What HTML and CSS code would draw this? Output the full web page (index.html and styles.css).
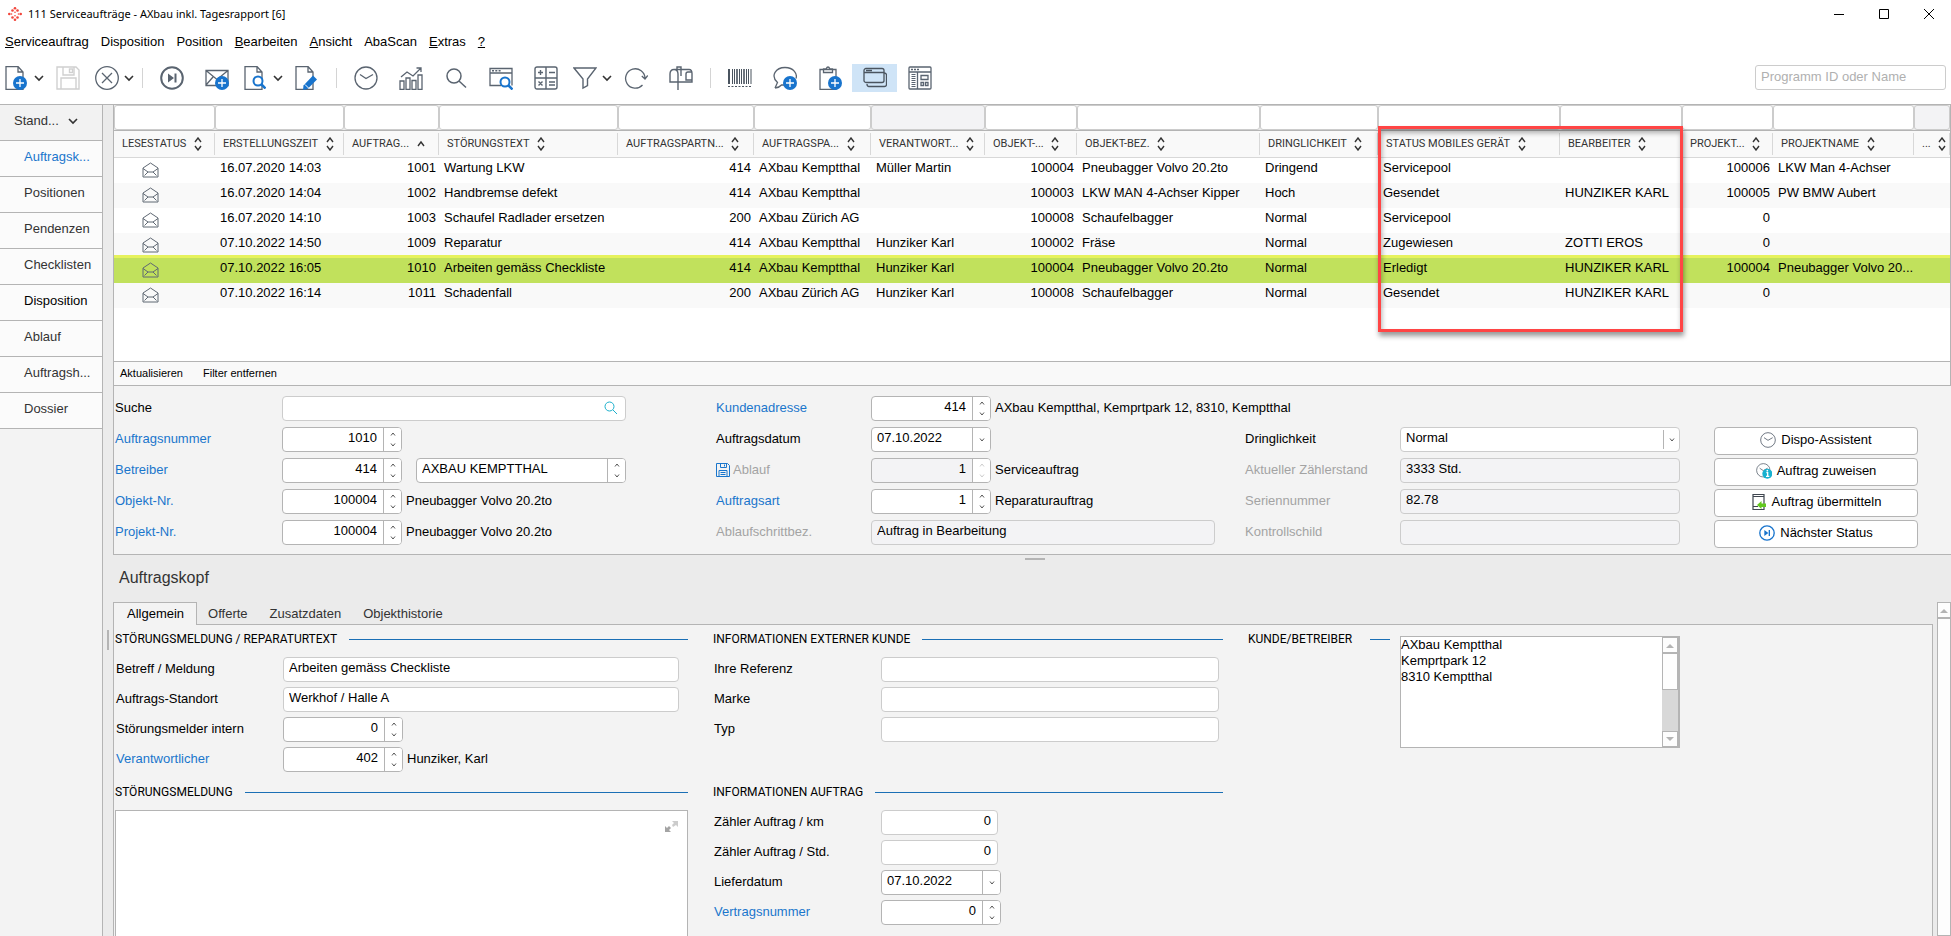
FILE: index.html
```html
<!DOCTYPE html>
<html lang="de">
<head>
    <meta charset="UTF-8">
    <meta name="viewport" content="width=device-width, initial-scale=1.0">
    <title>111 Serviceaufträge - AXbau inkl. Tagesrapport [6]</title>
    <link rel="stylesheet" href="styles.css">
</head>
<body>
    <!-- Icon definitions -->
    <svg class="defs" aria-hidden="true">
        <symbol id="chev" viewBox="0 0 10 8"><path d="M1 2l4 4 4-4" fill="none" stroke="#333" stroke-width="1.6"/></symbol>
        <symbol id="up" viewBox="0 0 6 4"><path d="M1 3.5l2-2.5 2 2.5" fill="none" stroke="currentColor"/></symbol>
        <symbol id="down" viewBox="0 0 6 4"><path d="M1 .5l2 2.5 2-2.5" fill="none" stroke="currentColor"/></symbol>
        <symbol id="sort" viewBox="0 0 8 14"><path d="M1 5l3-4 3 4M1 9l3 4 3-4" fill="none" stroke="#333" stroke-width="1.4"/></symbol>
        <symbol id="sort-up" viewBox="0 0 8 14"><path d="M1 9l3-4 3 4" fill="none" stroke="#333" stroke-width="1.4"/></symbol>
        <symbol id="mail-open" viewBox="0 0 17 16"><path d="M1 6l7.500-5L16 6v9H1zM1 6.500l5 3.500h5l5-3.500M2.500 13.500L6 10M14.500 13.500L11 10" fill="none" stroke="#5f6873"/></symbol>
        <symbol id="plus" viewBox="0 0 14 14"><circle cx="7" cy="7" r="7" fill="#1874cd"/><path d="M7 3v8M3 7h8" stroke="#fff" stroke-width="1.3"/></symbol>
        <symbol id="lens-blue" viewBox="0 0 14 14"><circle cx="6" cy="6" r="4.500" fill="#fff" stroke="#1874cd" stroke-width="2"/><path d="M9 9l4.500 4.500" stroke="#1874cd" stroke-width="2.500"/></symbol>
        <symbol id="page" viewBox="0 0 24 24"><path d="M1 .5h12l5 5.500v17.500H1zM13 .5V6h5" fill="#fff" stroke="#5a6470" stroke-width="1.300"/></symbol>
        <symbol id="clock" viewBox="0 0 24 24"><circle cx="12" cy="12" r="11" fill="none" stroke="#5a6470" stroke-width="1.300"/><path d="M6 8.500l6 4 7-4" fill="none" stroke="#5a6470" stroke-width="1.300"/></symbol>
        <symbol id="next" viewBox="0 0 24 24"><circle cx="12" cy="12" r="10.800" fill="none" stroke="currentColor" stroke-width="2"/><path d="M8 7.500l6 4.500-6 4.500zM14.500 7.500h2v9h-2z" fill="currentColor"/></symbol>
        <symbol id="arrow-up" viewBox="0 0 8 5"><path d="M0 5l4-4 4 4z" fill="#b4b4b4"/></symbol>
        <symbol id="arrow-down" viewBox="0 0 8 5"><path d="M0 0l4 4 4-4z" fill="#b4b4b4"/></symbol>
    </svg>

    <header class="titlebar">
        <svg class="logo" viewBox="0 0 14 14" fill="#f2463c">
            <circle cx="7" cy="1.300" r="1.300"/><circle cx="4.500" cy="3.500" r="1.300"/><circle cx="9.500" cy="3.500" r="1.300"/><circle cx="7" cy="5.200" r=".8"/>
            <circle cx="1.300" cy="7" r="1.300"/><circle cx="3.500" cy="7" r=".8"/><circle cx="12.700" cy="7" r="1.300"/><circle cx="10.500" cy="7" r=".8"/>
            <circle cx="7" cy="12.700" r="1.300"/><circle cx="4.500" cy="10.500" r="1.300"/><circle cx="9.500" cy="10.500" r="1.300"/><circle cx="7" cy="8.800" r=".8"/>
        </svg>
        <h1 class="title">111 Serviceaufträge - AXbau inkl. Tagesrapport [6]</h1>
        <button class="win-btn" aria-label="Minimieren"><svg width="12" height="12"><path d="M1 6.500h10" stroke="#000"/></svg></button>
        <button class="win-btn" aria-label="Maximieren"><svg width="12" height="12"><path d="M1.500 1.500h9v9h-9z" fill="none" stroke="#000"/></svg></button>
        <button class="win-btn" aria-label="Schliessen"><svg width="12" height="12"><path d="M1 1l10 10M11 1L1 11" stroke="#000"/></svg></button>
    </header>

    <nav class="menubar">
        <a href="#"><u>S</u>erviceauftrag</a>
        <a href="#">Disposition</a>
        <a href="#">Position</a>
        <a href="#"><u>B</u>earbeiten</a>
        <a href="#"><u>A</u>nsicht</a>
        <a href="#">AbaScan</a>
        <a href="#"><u>E</u>xtras</a>
        <a href="#"><u>?</u></a>
    </nav>

    <div class="toolbar">
        <button class="tool drop" aria-label="Neu">
            <svg class="icon" viewBox="0 0 24 24"><use href="#page" width="24" height="24"/><use href="#plus" x="8" y="10" width="14" height="14"/></svg>
            <svg class="chev"><use href="#chev"/></svg>
        </button>
        <button class="tool" aria-label="Speichern" disabled>
            <svg class="icon" viewBox="0 0 24 24" fill="none" stroke="#d0d0d0" stroke-width="1.400"><path d="M1 1h19l3 3v19H1zM5 23V12h15v11M7 1v8h11V1"/><rect x="13.500" y="3" width="3" height="3.500"/></svg>
        </button>
        <button class="tool drop" aria-label="Abbrechen">
            <svg class="icon" viewBox="0 0 24 24" fill="none" stroke="#5a6470" stroke-width="1.300"><circle cx="12" cy="12" r="11.300"/><path d="M7 7l10 10M17 7L7 17"/></svg>
            <svg class="chev"><use href="#chev"/></svg>
        </button>
        <span class="sep"></span>
        <button class="tool" aria-label="Weiter"><svg class="icon dark"><use href="#next"/></svg></button>
        <button class="tool" aria-label="Neue Mail">
            <svg class="icon" viewBox="0 0 24 24"><path d="M1 4.500h22v15H1zM1 4.500l11 9 11-9M1 19l7-8" fill="none" stroke="#5a6470" stroke-width="1.300"/><use href="#plus" x="10" y="10" width="14" height="14"/></svg>
        </button>
        <button class="tool drop" aria-label="Vorschau">
            <svg class="icon" viewBox="0 0 24 24"><use href="#page" width="24" height="24"/><use href="#lens-blue" x="8" y="9" width="14" height="14"/></svg>
            <svg class="chev"><use href="#chev"/></svg>
        </button>
        <button class="tool" aria-label="Bearbeiten">
            <svg class="icon" viewBox="0 0 24 24"><use href="#page" width="24" height="24"/><path d="M8.500 19.500l9.500-10 4 4-9.500 9.500-4.500 1z" fill="#1874cd"/><path d="M10 18.500l3.500 3.500" stroke="#fff"/></svg>
        </button>
        <span class="sep"></span>
        <button class="tool" aria-label="Zeit"><svg class="icon"><use href="#clock"/></svg></button>
        <button class="tool" aria-label="Statistik">
            <svg class="icon" viewBox="0 0 24 24" fill="none" stroke="#5a6470" stroke-width="1.300"><path d="M1 15h4v8.500H1zM7 12h4v11.500H7zM13 14.500h4v9h-4zM19 9h4v14.500h-4zM2 11l6-5 6 4 8-8M17.500 2H22v4"/></svg>
        </button>
        <button class="tool" aria-label="Suchen">
            <svg class="icon" viewBox="0 0 24 24" fill="none" stroke="#5a6470" stroke-width="1.500"><circle cx="10" cy="10" r="7"/><path d="M15 15l7 6.500"/></svg>
        </button>
        <button class="tool" aria-label="Fenster suchen">
            <svg class="icon" viewBox="0 0 24 24"><path d="M12 19.500H1v-17h22v17M1 7h22" fill="none" stroke="#5a6470" stroke-width="1.300"/><path d="M3 4.800h9" stroke="#5a6470" stroke-width="1.500" stroke-dasharray="2 1.300"/><use href="#lens-blue" x="10" y="10" width="14" height="14"/></svg>
        </button>
        <button class="tool" aria-label="Rechner">
            <svg class="icon" viewBox="0 0 24 24" fill="none" stroke="#5a6470" stroke-width="1.400"><rect x="1" y="1" width="22" height="22" rx="2"/><path d="M12 1v22M1 12h22M4 6.500h5M6.500 4v5M15 6.500h6M4.500 15.500l4 4M8.500 15.500l-4 4M15 16h6M15 19h6"/></svg>
        </button>
        <button class="tool drop" aria-label="Filter">
            <svg class="icon" viewBox="0 0 24 24" fill="none" stroke="#5a6470" stroke-width="1.400"><path d="M1 2h22l-8.500 11v6.500L10 22v-9z"/></svg>
            <svg class="chev"><use href="#chev"/></svg>
        </button>
        <button class="tool" aria-label="Neu laden">
            <svg class="icon" viewBox="0 0 24 24" fill="none" stroke="#5a6470" stroke-width="1.300"><path d="M18.500 19A9.700 9.700 0 1 1 21 12.500M17.800 10l3.200 3 2.800-3.500"/></svg>
        </button>
        <button class="tool" aria-label="Briefkasten">
            <svg class="icon" viewBox="0 0 24 24" fill="none" stroke="#5a6470" stroke-width="1.400"><path d="M5 3.500h15q3 0 3 4V16H1V8q0-4.500 4-4.500t4 4.500v8M9 16v8M8 4V1h4v3v6M17 8q0-2 2-2h4M17 8v6h6"/></svg>
        </button>
        <span class="sep"></span>
        <button class="tool" aria-label="Barcode">
            <svg class="icon" viewBox="0 0 24 24" stroke="#4a545f"><path d="M1 3v15" stroke-width="2"/><path d="M4.500 3v15M6.500 3v15M11.500 3v15M13.500 3v15M18.500 3v15M20.500 3v15M23 3v15"/><path d="M9 3v15M16 3v15" stroke-width="1.600"/><path d="M0 20.500h24" stroke-dasharray="2 1.500"/></svg>
        </button>
        <button class="tool" aria-label="Kommentar">
            <svg class="icon" viewBox="0 0 24 24"><path d="M2 22l2.500-5.500C-3 9.500 3 1.500 12 1.500S24.500 8 23 12.500M2 22q4.500-.5 6.500-3h3" fill="none" stroke="#5a6470" stroke-width="1.300"/><use href="#plus" x="10" y="10" width="14" height="14"/></svg>
        </button>
        <button class="tool" aria-label="Einfügen">
            <svg class="icon" viewBox="0 0 24 24"><path d="M2 3.500h16v20H2zM5.500 6.500h9V3h-2.500q-2-4-4 0H5.500z" fill="#fff" stroke="#5a6470" stroke-width="1.300"/><use href="#plus" x="10" y="10" width="14" height="14"/></svg>
        </button>
        <button class="tool active" aria-label="Fenster">
            <svg class="icon" viewBox="0 0 24 24" fill="none" stroke="#4a545f" stroke-width="1.300"><rect x="1" y="2.500" width="20" height="14" rx="2"/><path d="M1 6.500h20M3 4.500h6M21 7q2.500 0 2.500 2v9.500q0 2-2 2H6q-2 0-2-2.500"/></svg>
        </button>
        <button class="tool" aria-label="Layout">
            <svg class="icon" viewBox="0 0 24 24" fill="none" stroke="#5a6470" stroke-width="1.300"><rect x="1" y="1" width="22" height="22" rx="1"/><path d="M1 6h22M9.500 6v17M13 9.500h7v4h-7zM13 16.500h2.500v3H13zM17.500 16.500H20v3h-2.500z"/><path d="M3 3.500h8" stroke-dasharray="2 1"/><path d="M5.500 8v13" stroke-width="4" stroke-dasharray="1 1"/></svg>
        </button>
        <input class="program-search" type="text" placeholder="Programm ID oder Name" aria-label="Programm ID oder Name">
    </div>

    <div class="main">
        <aside class="sidebar">
            <button class="side-head">Stand... <svg class="chev"><use href="#chev"/></svg></button>
            <a class="side-item current" href="#">Auftragsk...</a>
            <a class="side-item" href="#">Positionen</a>
            <a class="side-item" href="#">Pendenzen</a>
            <a class="side-item" href="#">Checklisten</a>
            <a class="side-item strong" href="#">Disposition</a>
            <a class="side-item" href="#">Ablauf</a>
            <a class="side-item" href="#">Auftragsh...</a>
            <a class="side-item" href="#">Dossier</a>
        </aside>
        <div class="gutter"><span class="grip-v"></span></div>

        <main class="content">
            <!-- Order list -->
            <section class="list">
                <div class="list-scroll">
                    <table>
                        <colgroup>
                            <col class="c101"><col class="c129"><col class="c95"><col class="c179"><col class="c136">
                            <col class="c117"><col class="c114"><col class="c92"><col class="c183"><col class="c118">
                            <col class="c182"><col class="c122"><col class="c91"><col class="c141"><col class="c36">
                        </colgroup>
                        <thead>
                            <tr class="filters">
                                <td><input aria-label="Filter Lesestatus"></td>
                                <td><input aria-label="Filter Erstellungszeit"></td>
                                <td><input aria-label="Filter Auftragsnummer"></td>
                                <td><input aria-label="Filter Störungstext"></td>
                                <td><input aria-label="Filter Auftragspartner-Nr."></td>
                                <td><input aria-label="Filter Auftragspartner"></td>
                                <td><input aria-label="Filter Verantwortlicher" disabled></td>
                                <td><input aria-label="Filter Objekt-Nr."></td>
                                <td><input aria-label="Filter Objekt-Bez."></td>
                                <td><input aria-label="Filter Dringlichkeit"></td>
                                <td><input aria-label="Filter Status"></td>
                                <td><input aria-label="Filter Bearbeiter"></td>
                                <td><input aria-label="Filter Projekt-Nr."></td>
                                <td><input aria-label="Filter Projektname"></td>
                                <td><input aria-label="Filter weitere" disabled></td>
                            </tr>
                            <tr class="heads">
                                <th>LESESTATUS <svg class="sort"><use href="#sort"/></svg></th>
                                <th>ERSTELLUNGSZEIT <svg class="sort"><use href="#sort"/></svg></th>
                                <th class="num">AUFTRAG... <svg class="sort"><use href="#sort-up"/></svg></th>
                                <th>STÖRUNGSTEXT <svg class="sort"><use href="#sort"/></svg></th>
                                <th class="num">AUFTRAGSPARTN... <svg class="sort"><use href="#sort"/></svg></th>
                                <th>AUFTRAGSPA... <svg class="sort"><use href="#sort"/></svg></th>
                                <th>VERANTWORT... <svg class="sort"><use href="#sort"/></svg></th>
                                <th class="num">OBJEKT-... <svg class="sort"><use href="#sort"/></svg></th>
                                <th>OBJEKT-BEZ. <svg class="sort"><use href="#sort"/></svg></th>
                                <th>DRINGLICHKEIT <svg class="sort"><use href="#sort"/></svg></th>
                                <th>STATUS MOBILES GERÄT <svg class="sort"><use href="#sort"/></svg></th>
                                <th>BEARBEITER <svg class="sort"><use href="#sort"/></svg></th>
                                <th class="num">PROJEKT... <svg class="sort"><use href="#sort"/></svg></th>
                                <th>PROJEKTNAME <svg class="sort"><use href="#sort"/></svg></th>
                                <th>... <svg class="sort"><use href="#sort"/></svg></th>
                            </tr>
                        </thead>
                        <tbody>
                            <tr>
                                <td class="status"><svg class="mail"><use href="#mail-open"/></svg></td><td>16.07.2020 14:03</td><td class="num">1001</td><td>Wartung LKW</td><td class="num">414</td><td>AXbau Kemptthal</td><td>Müller Martin</td><td class="num">100004</td><td>Pneubagger Volvo 20.2to</td><td>Dringend</td><td>Servicepool</td><td></td><td class="num">100006</td><td>LKW Man 4-Achser</td><td></td>
                            </tr>
                            <tr>
                                <td class="status"><svg class="mail"><use href="#mail-open"/></svg></td><td>16.07.2020 14:04</td><td class="num">1002</td><td>Handbremse defekt</td><td class="num">414</td><td>AXbau Kemptthal</td><td></td><td class="num">100003</td><td>LKW MAN 4-Achser Kipper</td><td>Hoch</td><td>Gesendet</td><td>HUNZIKER KARL</td><td class="num">100005</td><td>PW BMW Aubert</td><td></td>
                            </tr>
                            <tr>
                                <td class="status"><svg class="mail"><use href="#mail-open"/></svg></td><td>16.07.2020 14:10</td><td class="num">1003</td><td>Schaufel Radlader ersetzen</td><td class="num">200</td><td>AXbau Zürich AG</td><td></td><td class="num">100008</td><td>Schaufelbagger</td><td>Normal</td><td>Servicepool</td><td></td><td class="num">0</td><td></td><td></td>
                            </tr>
                            <tr>
                                <td class="status"><svg class="mail"><use href="#mail-open"/></svg></td><td>07.10.2022 14:50</td><td class="num">1009</td><td>Reparatur</td><td class="num">414</td><td>AXbau Kemptthal</td><td>Hunziker Karl</td><td class="num">100002</td><td>Fräse</td><td>Normal</td><td>Zugewiesen</td><td>ZOTTI EROS</td><td class="num">0</td><td></td><td></td>
                            </tr>
                            <tr class="selected">
                                <td class="status"><svg class="mail"><use href="#mail-open"/></svg></td><td>07.10.2022 16:05</td><td class="num">1010</td><td>Arbeiten gemäss Checkliste</td><td class="num">414</td><td>AXbau Kemptthal</td><td>Hunziker Karl</td><td class="num">100004</td><td>Pneubagger Volvo 20.2to</td><td>Normal</td><td>Erledigt</td><td>HUNZIKER KARL</td><td class="num">100004</td><td>Pneubagger Volvo 20...</td><td></td>
                            </tr>
                            <tr>
                                <td class="status"><svg class="mail"><use href="#mail-open"/></svg></td><td>07.10.2022 16:14</td><td class="num">1011</td><td>Schadenfall</td><td class="num">200</td><td>AXbau Zürich AG</td><td>Hunziker Karl</td><td class="num">100008</td><td>Schaufelbagger</td><td>Normal</td><td>Gesendet</td><td>HUNZIKER KARL</td><td class="num">0</td><td></td><td></td>
                            </tr>
                        </tbody>
                    </table>
                    <div class="highlight"></div>
                </div>
                <div class="list-actions">
                    <button>Aktualisieren</button>
                    <button>Filter entfernen</button>
                </div>
            </section>

            <!-- Order details -->
            <section class="order">
                <div class="fields">
                    <div class="row"><label for="suche">Suche</label>
                        <div class="box light search"><input id="suche" type="text"><svg class="lens" viewBox="0 0 14 14"><circle cx="5.500" cy="5.500" r="4.500"/><path d="M9 9l4 4"/></svg></div>
                    </div>
                    <div class="row"><label class="link" for="nr">Auftragsnummer</label>
                        <div class="box spin"><input id="nr" class="num" value="1010"><span class="steps"><button aria-label="Mehr"><svg><use href="#up"/></svg></button><button aria-label="Weniger"><svg><use href="#down"/></svg></button></span></div>
                    </div>
                    <div class="row"><label class="link" for="betreiber">Betreiber</label>
                        <div class="box spin"><input id="betreiber" class="num" value="414"><span class="steps"><button aria-label="Mehr"><svg><use href="#up"/></svg></button><button aria-label="Weniger"><svg><use href="#down"/></svg></button></span></div>
                        <div class="box spin name"><input aria-label="Betreiber Name" value="AXBAU KEMPTTHAL"><span class="steps"><button aria-label="Mehr"><svg><use href="#up"/></svg></button><button aria-label="Weniger"><svg><use href="#down"/></svg></button></span></div>
                    </div>
                    <div class="row"><label class="link" for="objekt">Objekt-Nr.</label>
                        <div class="box spin"><input id="objekt" class="num" value="100004"><span class="steps"><button aria-label="Mehr"><svg><use href="#up"/></svg></button><button aria-label="Weniger"><svg><use href="#down"/></svg></button></span></div>
                        <span class="after">Pneubagger Volvo 20.2to</span>
                    </div>
                    <div class="row"><label class="link" for="projekt">Projekt-Nr.</label>
                        <div class="box spin"><input id="projekt" class="num" value="100004"><span class="steps"><button aria-label="Mehr"><svg><use href="#up"/></svg></button><button aria-label="Weniger"><svg><use href="#down"/></svg></button></span></div>
                        <span class="after">Pneubagger Volvo 20.2to</span>
                    </div>
                </div>

                <div class="fields narrow">
                    <div class="row"><label class="link" for="adresse">Kundenadresse</label>
                        <div class="box spin"><input id="adresse" class="num" value="414"><span class="steps"><button aria-label="Mehr"><svg><use href="#up"/></svg></button><button aria-label="Weniger"><svg><use href="#down"/></svg></button></span></div>
                        <span class="after">AXbau Kemptthal, Kemprtpark 12, 8310, Kemptthal</span>
                    </div>
                    <div class="row"><label for="datum">Auftragsdatum</label>
                        <div class="box spin"><input id="datum" value="07.10.2022"><span class="steps"><button aria-label="Kalender"><svg><use href="#down"/></svg></button></span></div>
                    </div>
                    <div class="row"><label class="off" for="ablauf"><svg class="disk" viewBox="0 0 14 14"><path d="M.5.5h11l2 2v11H.5zM4.500.5v4h6v-4M3 13.500v-6h8v6M4.500 9.500h5M4.500 11.500h5M8.500 1.500v2"/></svg>Ablauf</label>
                        <div class="box spin off"><input id="ablauf" class="num" value="1" readonly><span class="steps"><button aria-label="Mehr"><svg><use href="#up"/></svg></button><button aria-label="Weniger"><svg><use href="#down"/></svg></button></span></div>
                        <span class="after">Serviceauftrag</span>
                    </div>
                    <div class="row"><label class="link" for="art">Auftragsart</label>
                        <div class="box spin"><input id="art" class="num" value="1"><span class="steps"><button aria-label="Mehr"><svg><use href="#up"/></svg></button><button aria-label="Weniger"><svg><use href="#down"/></svg></button></span></div>
                        <span class="after">Reparaturauftrag</span>
                    </div>
                    <div class="row"><label class="off" for="schritt">Ablaufschrittbez.</label>
                        <div class="box light off search"><input id="schritt" value="Auftrag in Bearbeitung" readonly></div>
                    </div>
                </div>

                <div class="fields narrow second">
                    <div class="row"><label for="dringlich">Dringlichkeit</label>
                        <div class="box light wide"><select id="dringlich"><option>Normal</option><option>Hoch</option><option>Dringend</option></select><span class="pick"><svg><use href="#down"/></svg></span></div>
                    </div>
                    <div class="row"><label class="off" for="zaehler">Aktueller Zählerstand</label>
                        <div class="box light off wide"><input id="zaehler" value="3333 Std." readonly></div>
                    </div>
                    <div class="row"><label class="off" for="serie">Seriennummer</label>
                        <div class="box light off wide"><input id="serie" value="82.78" readonly></div>
                    </div>
                    <div class="row"><label class="off" for="schild">Kontrollschild</label>
                        <div class="box light off wide"><input id="schild" readonly></div>
                    </div>
                </div>

                <div class="actions">
                    <button><svg class="act"><use href="#clock"/></svg>Dispo-Assistent</button>
                    <button><svg class="act" viewBox="0 0 24 24"><use href="#clock" width="22" height="22"/><circle cx="17" cy="16" r="7.500" fill="#17b1d0"/><path d="M15.500 14.500h2v5.500M15 20h5" fill="none" stroke="#fff" stroke-width="2"/><circle cx="17" cy="11.500" r="1.300" fill="#fff"/></svg>Auftrag zuweisen</button>
                    <button><svg class="act" viewBox="0 0 16 16"><path d="M2 .5h11v15H2zM2 2.500h11M2 12.500h5" fill="none" stroke="#3f4650" stroke-width="1.200"/><path d="M6 11l4.500-4v2.500H15v3.500h-4.500V15z" fill="#62c81e"/></svg>Auftrag übermitteln</button>
                    <button><svg class="act blue"><use href="#next"/></svg>Nächster Status</button>
                </div>
            </section>

            <!-- Lower pane -->
            <div class="pane-head">
                <span class="grip-h"></span>
                <h2>Auftragskopf</h2>
            </div>
            <div class="pane">
                <div class="pane-main">
                    <div class="tabs">
                        <button class="tab on">Allgemein</button>
                        <button class="tab">Offerte</button>
                        <button class="tab">Zusatzdaten</button>
                        <button class="tab">Objekthistorie</button>
                    </div>
                    <div class="sheet">
                        <section class="group">
                            <h3>STÖRUNGSMELDUNG / REPARATURTEXT</h3>
                            <div class="row"><label for="betreff">Betreff / Meldung</label><div class="box light full"><input id="betreff" value="Arbeiten gemäss Checkliste"></div></div>
                            <div class="row"><label for="standort">Auftrags-Standort</label><div class="box light full"><input id="standort" value="Werkhof / Halle A"></div></div>
                            <div class="row"><label for="melder">Störungsmelder intern</label>
                                <div class="box spin"><input id="melder" class="num" value="0"><span class="steps"><button aria-label="Mehr"><svg><use href="#up"/></svg></button><button aria-label="Weniger"><svg><use href="#down"/></svg></button></span></div>
                            </div>
                            <div class="row"><label class="link" for="verantw">Verantwortlicher</label>
                                <div class="box spin"><input id="verantw" class="num" value="402"><span class="steps"><button aria-label="Mehr"><svg><use href="#up"/></svg></button><button aria-label="Weniger"><svg><use href="#down"/></svg></button></span></div>
                                <span class="after">Hunziker, Karl</span>
                            </div>
                        </section>

                        <section class="group">
                            <h3>INFORMATIONEN EXTERNER KUNDE</h3>
                            <div class="row"><label for="referenz">Ihre Referenz</label><div class="box light ext"><input id="referenz"></div></div>
                            <div class="row"><label for="marke">Marke</label><div class="box light ext"><input id="marke"></div></div>
                            <div class="row"><label for="typ">Typ</label><div class="box light ext"><input id="typ"></div></div>
                        </section>

                        <section class="customer">
                            <h3>KUNDE/BETREIBER</h3>
                            <div class="memo">
                                <textarea aria-label="Kunde/Betreiber">AXbau Kemptthal
Kemprtpark 12
8310 Kemptthal</textarea>
                                <div class="bar">
                                    <span class="bar-btn"><svg><use href="#arrow-up"/></svg></span>
                                    <span class="thumb"></span>
                                    <span class="bar-btn end"><svg><use href="#arrow-down"/></svg></span>
                                </div>
                            </div>
                        </section>

                        <section class="group grow">
                            <h3>STÖRUNGSMELDUNG</h3>
                            <div class="note">
                                <textarea aria-label="Störungsmeldung"></textarea>
                                <svg class="expand" viewBox="0 0 14 14"><path d="M7 2h6v6l-2-2-3 2-1-2 2-2z" fill="#ccc"/><path d="M0 7l2 2 2-2 2 2-2 2 2 2H0z" fill="#a4a4a4"/></svg>
                            </div>
                        </section>

                        <section class="group">
                            <h3>INFORMATIONEN AUFTRAG</h3>
                            <div class="row"><label for="km">Zähler Auftrag / km</label><div class="box light count"><input id="km" class="num" value="0"></div></div>
                            <div class="row"><label for="std">Zähler Auftrag / Std.</label><div class="box light count"><input id="std" class="num" value="0"></div></div>
                            <div class="row"><label for="liefer">Lieferdatum</label>
                                <div class="box spin"><input id="liefer" value="07.10.2022"><span class="steps"><button aria-label="Kalender"><svg><use href="#down"/></svg></button></span></div>
                            </div>
                            <div class="row"><label class="link" for="vertrag">Vertragsnummer</label>
                                <div class="box spin"><input id="vertrag" class="num" value="0"><span class="steps"><button aria-label="Mehr"><svg><use href="#up"/></svg></button><button aria-label="Weniger"><svg><use href="#down"/></svg></button></span></div>
                            </div>
                        </section>
                    </div>
                </div>
                <div class="bar page-bar">
                    <span class="bar-btn"><svg><use href="#arrow-up"/></svg></span>
                    <span class="thumb"></span>
                </div>
            </div>
        </main>
    </div>
</body>
</html>
```
FILE: styles.css
```css
* {
    box-sizing: border-box;
}
body {
    margin: 0;
    height: 100vh;
    display: flex;
    flex-direction: column;
    overflow: hidden;
    background: #fff;
    color: #000;
    font: 13px/16px "Liberation Sans", Arial, sans-serif;
}
button, input, select, textarea {
    font: inherit;
    color: inherit;
}
button {
    padding: 0;
    border: none;
    background: none;
    cursor: pointer;
}
a {
    color: inherit;
    text-decoration: none;
}
svg {
    display: block;
    flex: none;
}
.defs {
    width: 0;
    height: 0;
    position: absolute;
}

/* Title, menu and toolbar */
.titlebar {
    display: flex;
    align-items: center;
    height: 28px;
    padding-left: 8px;
}
.logo {
    width: 14px;
    height: 14px;
}
.title {
    flex: 1;
    margin: 0 0 0 6px;
    font: 11px/16px "Noto Sans", "Open Sans", sans-serif;
}
.win-btn {
    width: 45px;
    height: 28px;
    display: flex;
    align-items: center;
    justify-content: center;
}
.menubar {
    display: flex;
    height: 28px;
    align-items: center;
    gap: 12px;
    padding: 0 5px 1px;
}
.toolbar {
    display: flex;
    align-items: center;
    height: 49px;
    flex: none;
    padding-bottom: 5px;
    padding-right: 5px;
    border-bottom: 1px solid #b4b4b4;
}
.tool {
    display: flex;
    align-items: center;
    justify-content: center;
    gap: 5px;
    width: 45px;
    height: 28px;
}
.tool.drop {
    justify-content: flex-start;
    padding-left: 5px;
}
.tool.active {
    background: #cfe4f7;
}
.icon {
    width: 24px;
    height: 24px;
}
.icon.dark {
    color: #5a6470;
}
.chev {
    width: 10px;
    height: 8px;
}
.sep {
    width: 1px;
    height: 20px;
    margin: 0 6px 0 7px;
    background: #d4d4d4;
}
.program-search {
    width: 191px;
    height: 25px;
    margin-left: auto;
    padding: 0 5px 2px;
    border: 1px solid #ccc;
    border-radius: 3px;
}
.program-search::placeholder {
    color: #b0b0b0;
}

.main {
    flex: 1;
    display: flex;
    min-height: 0;
}
.sidebar {
    width: 103px;
    flex: none;
    display: flex;
    flex-direction: column;
    background: #f3f3f3;
    border-right: 1px solid #b4b4b4;
}
.side-head, .side-item {
    display: flex;
    align-items: center;
    height: 36px;
    border-bottom: 1px solid #b4b4b4;
    color: #333;
}
.side-head {
    gap: 9px;
    padding: 0 0 3px 14px;
    background: #f2f2f2;
}
.side-item {
    padding: 0 0 3px 24px;
    background: #fbfbfb;
}
.side-item.current {
    color: #1a76cc;
}
.side-item.strong {
    color: #000;
}
.gutter {
    width: 10px;
    flex: none;
    padding: 525px 0 0 4px;
    background: #ebebeb;
}
.grip-v {
    display: block;
    width: 2px;
    height: 20px;
    background: #b4b4b4;
}
.content {
    flex: 1;
    display: flex;
    flex-direction: column;
    min-width: 0;
    background: #ebebeb;
}

/* Order list */
.list {
    background: #fff;
    border: 1px solid #b4b4b4;
    border-top: none;
}
.list-scroll {
    position: relative;
    height: 256px;
}
table {
    width: 100%;
    table-layout: fixed;
    border-collapse: separate;
    border-spacing: 0;
}
.c101 { width: 101px; }
.c129 { width: 129px; }
.c95 { width: 95px; }
.c179 { width: 179px; }
.c136 { width: 136px; }
.c117 { width: 117px; }
.c114 { width: 114px; }
.c92 { width: 92px; }
.c183 { width: 183px; }
.c118 { width: 118px; }
.c182 { width: 182px; }
.c122 { width: 122px; }
.c91 { width: 91px; }
.c141 { width: 141px; }
.c36 { width: 36px; }
.filters td {
    height: 26px;
    padding: 0;
    background: #ececec;
    border-bottom: 1px solid #b4b4b4;
}
.filters input {
    display: block;
    width: 100%;
    height: 25px;
    padding: 0 5px;
    border: 1px solid #ccc;
    border-radius: 3px;
    background: #fff;
}
.filters input:disabled {
    background: #f3f3f5;
}
.heads th {
    height: 27px;
    padding: 0 8px;
    background: linear-gradient(#d8d8d8, #d8d8d8) right / 1px 22px no-repeat #f9f9f9;
    border-bottom: 1px solid #d8d8d8;
    color: #333;
    font: 11px/16px Roboto, "Liberation Sans", sans-serif;
    text-align: left;
    white-space: nowrap;
}
.heads th.num {
    padding-right: 11px;
}
.sort {
    display: inline-block;
    width: 8px;
    height: 14px;
    margin-left: 5px;
    vertical-align: middle;
}
tbody td {
    height: 25px;
    padding: 0 3px 5px 5px;
    white-space: nowrap;
    overflow: hidden;
}
tbody tr:nth-child(even) td {
    background: #f9f9f9;
}
tbody tr:nth-child(4) td {
    box-shadow: inset 0 -3px #e6f25c;
}
tbody tr.selected td {
    background: #c1e15c;
}
.num {
    text-align: right;
}
tbody td.status {
    padding: 0 0 2px 28px;
}
.mail {
    width: 17px;
    height: 16px;
}
.highlight {
    position: absolute;
    top: 21px;
    left: 1264px;
    width: 305px;
    height: 206px;
    border: 3px solid #ff4545;
    box-shadow: 1px 4px 5px rgba(0,0,0,0.4), inset 1px 4px 5px rgba(0,0,0,0.3);
    pointer-events: none;
}
.list-actions {
    display: flex;
    gap: 20px;
    height: 24px;
    padding: 0 0 2px 6px;
    background: #f9f9f9;
    border-top: 1px solid #b4b4b4;
    font-size: 11px;
}

/* Form fields */
.row {
    display: flex;
    align-items: center;
    height: 25px;
    white-space: nowrap;
}
.row label {
    width: 167px;
    flex: none;
    display: flex;
    align-items: center;
    padding-bottom: 2px;
}
.narrow .row label {
    width: 155px;
}
.row label.link {
    color: #1a76cc;
}
.row label.off {
    color: #a3a3a3;
}
.box {
    display: flex;
    flex: none;
    height: 25px;
    border: 1px solid #b4b4b4;
    border-radius: 4px;
    background: #fff;
    overflow: hidden;
}
.box.light {
    border-color: #ccc;
}
.box.off {
    background: #f3f3f5;
}
.box input, .box select {
    flex: 1;
    width: 0;
    padding: 0 6px 3px 5px;
    border: none;
    background: none;
    outline: none;
}
.box select {
    appearance: none;
}
.spin {
    width: 120px;
}
.spin.name {
    width: 210px;
    margin-left: 14px;
}
.search {
    width: 344px;
}
.wide {
    width: 280px;
}
.full {
    width: 396px;
}
.ext {
    width: 338px;
}
.count {
    width: 117px;
}
.steps {
    display: flex;
    flex-direction: column;
    justify-content: space-around;
    align-items: center;
    width: 18px;
    border-left: 1px solid #b4b4b4;
    background: #fff;
    color: #555;
}
.steps svg, .pick svg {
    width: 6px;
    height: 4px;
}
.off .steps {
    color: #ccc;
}
.pick {
    display: flex;
    align-items: center;
    justify-content: center;
    width: 16px;
    margin: 2px 0;
    border-left: 1px solid #b4b4b4;
    color: #555;
    pointer-events: none;
}
.lens {
    width: 14px;
    height: 14px;
    margin: 4px 7px;
    fill: none;
    stroke: #1cb0cc;
}
.disk {
    width: 14px;
    height: 14px;
    margin-right: 3px;
    fill: none;
    stroke: #1a76cc;
}
.after {
    margin-left: 4px;
    padding-bottom: 2px;
}

.order {
    display: grid;
    grid-template-columns: 601fr 529fr 469fr 237fr;
    padding: 10px 0 6px 1px;
    background: #f3f3f3;
    border-left: 1px solid #b4b4b4;
    border-bottom: 1px solid #b4b4b4;
}
.fields {
    display: flex;
    flex-direction: column;
    gap: 6px;
    min-width: 0;
}
.fields.second, .actions {
    padding-top: 31px;
}
.actions {
    display: flex;
    flex-direction: column;
    gap: 3px;
}
.actions button {
    display: flex;
    align-items: center;
    justify-content: center;
    gap: 5px;
    width: 204px;
    height: 28px;
    padding-bottom: 2px;
    border: 1px solid #b4b4b4;
    border-radius: 4px;
    background: #fff;
}
.act {
    width: 16px;
    height: 16px;
}
.act.blue {
    color: #1874cd;
}

/* Lower pane */
.pane-head {
    height: 47px;
    padding: 3px 0 0 6px;
}
.grip-h {
    display: block;
    width: 20px;
    height: 2px;
    margin: 0 auto;
    background: #b4b4b4;
}
.pane-head h2 {
    margin: 8px 0 0;
    color: #333;
    font-size: 16px;
    font-weight: normal;
    line-height: 20px;
}
.pane {
    flex: 1;
    display: flex;
    gap: 4px;
    min-height: 0;
}
.pane-main {
    flex: 1;
    display: flex;
    flex-direction: column;
    min-width: 0;
}
.tabs {
    display: flex;
    height: 23px;
    border-bottom: 1px solid #b4b4b4;
}
.tab {
    height: 23px;
    padding: 0 11px;
    color: #333;
}
.tab.on {
    padding: 0 12px 0 13px;
    background: #f3f3f3;
    border: 1px solid #b4b4b4;
    border-bottom: none;
    color: #000;
}
.sheet {
    flex: 1;
    display: grid;
    grid-template-columns: 598fr 535fr 684fr;
    grid-template-rows: auto 1fr;
    row-gap: 10px;
    min-height: 0;
    padding: 4px 0 0 1px;
    background: #f3f3f3;
    border-left: 1px solid #b4b4b4;
    border-right: 1px solid #b4b4b4;
}
.group {
    display: flex;
    flex-direction: column;
    gap: 5px;
    min-width: 0;
    margin-right: 25px;
}
.group .row label {
    width: 168px;
    padding-left: 1px;
}
h3 {
    display: flex;
    align-items: center;
    gap: 12px;
    height: 20px;
    margin: 0 0 3px;
    font: 12px/16px Roboto, "Liberation Sans", sans-serif;
    white-space: nowrap;
}
h3::after {
    content: "";
    flex: 1;
    height: 1px;
    background: #1a6fb5;
}
.customer {
    display: flex;
    align-items: flex-start;
    gap: 10px;
}
.customer h3 {
    width: 142px;
    gap: 18px;
}
.memo {
    display: flex;
    width: 280px;
    height: 112px;
    margin-top: 7px;
    border: 1px solid #b4b4b4;
    background: #fff;
}
textarea {
    flex: 1;
    min-width: 0;
    padding: 0;
    border: none;
    outline: none;
    resize: none;
    background: #fff;
}
.bar {
    display: flex;
    flex-direction: column;
    width: 17px;
    border-right: 1px solid #b4b4b4;
    background: #d8d8d8;
}
.bar-btn {
    display: flex;
    align-items: center;
    justify-content: center;
    height: 16px;
    border: 1px solid #b4b4b4;
    background: #fdfdfd;
}
.bar-btn svg {
    width: 8px;
    height: 5px;
}
.bar-btn.end {
    margin-top: auto;
}
.thumb {
    height: 37px;
    border: 1px solid #b4b4b4;
    background: #fdfdfd;
}
.page-bar {
    width: 14px;
    border: none;
}
.page-bar .thumb {
    flex: 1;
}
.grow {
    min-height: 0;
}
.note {
    flex: 1;
    display: flex;
    position: relative;
    border: 1px solid #b4b4b4;
    border-bottom: none;
}
.expand {
    position: absolute;
    top: 8px;
    right: 8px;
    width: 14px;
    height: 14px;
}
```
